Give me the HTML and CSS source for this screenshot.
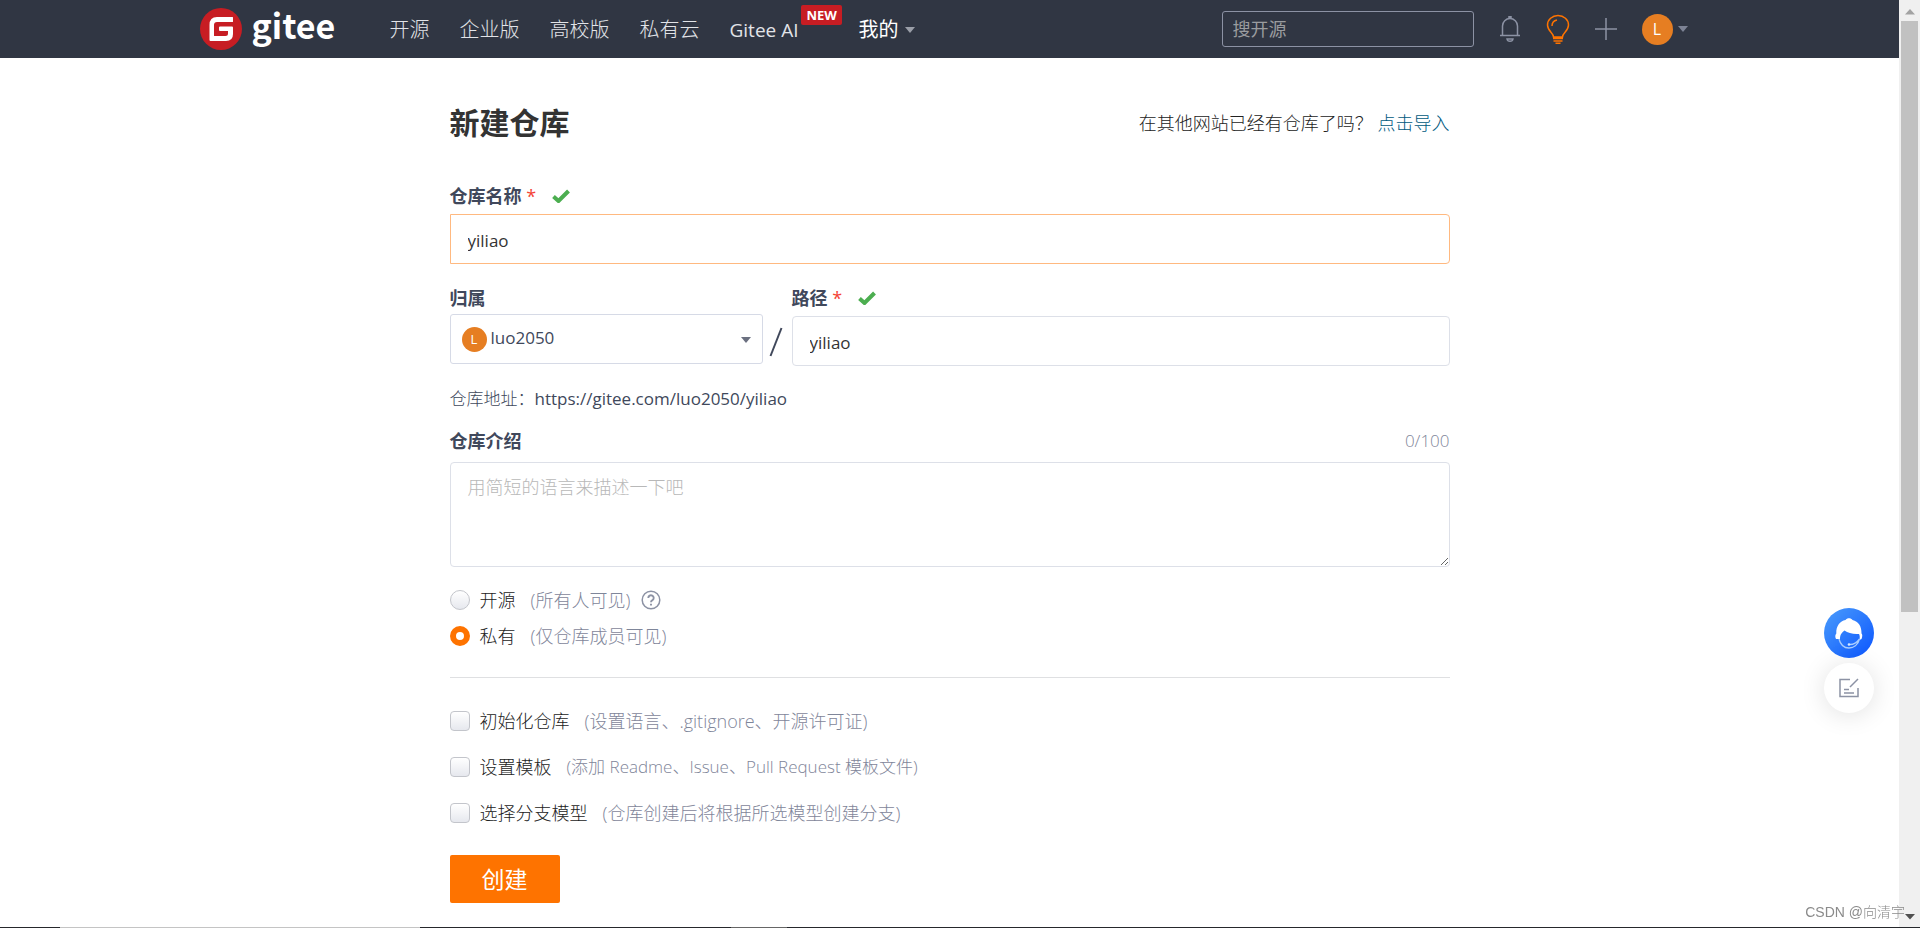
FILE: index.html
```html
<!DOCTYPE html>
<html lang="zh-CN">
<head>
<meta charset="utf-8">
<title>新建仓库 - Gitee</title>
<link rel="stylesheet" href="styles.css">
</head>
<body>
<div class="window">
  <div class="page">
    <header class="topbar">
      <div class="topbar-inner">
        <a class="logo" href="#">
          <svg class="logo-mark" viewBox="0 0 42 42" aria-hidden="true">
            <circle cx="21" cy="21" r="21" fill="#c71d23"/>
            <path d="M33 9.500V13.500Q33 14 32.500 14H17Q14 14 14 17V27.500Q14 28 14.500 28H25.500Q28 28 28 25.500V23H20Q19 23 19 22V19.500Q19 18.500 20 18.500H32Q33 18.500 33 19.500V26Q33 33 26 33H10.500Q9.500 33 9.500 32V17Q9.500 9 17 9H32.500Q33 9 33 9.500Z" fill="#fff"/>
          </svg>
          <span class="logo-text">gitee</span>
        </a>
        <nav class="nav">
          <a href="#">开源</a>
          <a href="#">企业版</a>
          <a href="#">高校版</a>
          <a href="#">私有云</a>
          <a class="nav-ai" href="#">Gitee AI<span class="badge">NEW</span></a>
          <a class="nav-mine" href="#">我的<svg class="caret" viewBox="0 0 10 6" aria-hidden="true"><path d="M0 0h10L5 6z" fill="currentColor"/></svg></a>
        </nav>
        <div class="tools">
          <input class="search" type="search" placeholder="搜开源" aria-label="搜开源">
          <button class="tool" type="button" aria-label="通知">
            <svg width="22" height="28" viewBox="0 0 22 28" fill="none" stroke="#8c92a4" stroke-width="1.500"><path d="M1 20.500h20M3.500 20V11a7.500 7.500 0 0 1 15 0v9M10 3V1.800h2V3M8 24c.5 3 5.500 3 6 0z"/></svg>
          </button>
          <button class="tool" type="button" aria-label="动态">
            <svg width="24" height="30" viewBox="0 0 24 30" fill="none" stroke="#fe7300" stroke-width="1.500"><path d="M7.500 23c0-4-6-6-6-12a10.500 9.500 0 0 1 21 0c0 6-6 8-6 12zM6 12q0-5 5-6M7 24.500h10M7.500 27h9M9.500 29.200h5"/></svg>
          </button>
          <button class="tool" type="button" aria-label="新建">
            <svg width="22" height="22" viewBox="0 0 22 22" stroke="#8c92a4" stroke-width="1.500"><path d="M11 0v22M0 11h22"/></svg>
          </button>
          <button class="tool user" type="button" aria-label="用户菜单"><span class="avatar">L</span><svg class="caret" viewBox="0 0 10 6" aria-hidden="true"><path d="M0 0h10L5 6z" fill="currentColor"/></svg></button>
        </div>
      </div>
    </header>

    <main class="content">
      <div class="heading">
        <h1>新建仓库</h1>
        <p>在其他网站已经有仓库了吗？ <a href="#">点击导入</a></p>
      </div>
      <form class="form">
        <div class="field">
          <div class="label-row">
            <label for="name">仓库名称 <span class="required">*</span></label>
            <svg class="check" viewBox="0 0 18 14" aria-hidden="true"><path d="M1.500 7.500L6.500 12 16.500 2" fill="none" stroke="#4cae50" stroke-width="4"/></svg>
          </div>
          <input class="text focused" id="name" type="text" value="yiliao">
        </div>
        <div class="path-row">
          <div class="owner">
            <div class="label-row"><label for="owner">归属</label></div>
            <div class="select-box">
              <select id="owner"><option>luo2050</option></select>
              <span class="avatar small">L</span>
              <svg class="caret" viewBox="0 0 10 6" aria-hidden="true"><path d="M0 0h10L5 6z" fill="currentColor"/></svg>
            </div>
          </div>
          <svg class="slash" viewBox="0 0 14 30" aria-hidden="true"><path d="M1.500 29L12.500 1" stroke="#40485b" stroke-width="2"/></svg>
          <div class="path">
            <div class="label-row">
              <label for="path">路径 <span class="required">*</span></label>
              <svg class="check" viewBox="0 0 18 14" aria-hidden="true"><path d="M1.500 7.500L6.500 12 16.500 2" fill="none" stroke="#4cae50" stroke-width="4"/></svg>
            </div>
            <input class="text" id="path" type="text" value="yiliao">
          </div>
        </div>
        <p class="address">仓库地址：<span class="url">https://gitee.com/luo2050/yiliao</span></p>
        <div class="field intro">
          <div class="label-row spread"><label for="intro">仓库介绍</label><span class="hint compact">0/100</span></div>
          <textarea id="intro" placeholder="用简短的语言来描述一下吧"></textarea>
        </div>
        <div class="radios">
          <div class="option">
            <input id="open" name="visibility" type="radio"><label for="open">开源</label><span class="hint">(所有人可见)</span>
            <svg class="help" viewBox="0 0 20 20" fill="none" stroke="#8c92a4" stroke-width="1.500" aria-hidden="true"><circle cx="10" cy="10" r="8.800"/><path d="M7.300 8a2.700 2.700 0 1 1 4.200 2.200Q10 11 10 12.300M10 13.700v1.800" stroke-width="1.900"/></svg>
          </div>
          <div class="option">
            <input id="private" name="visibility" type="radio" checked><label for="private">私有</label><span class="hint">(仅仓库成员可见)</span>
          </div>
        </div>
        <div class="checks">
          <div class="option"><input id="init" type="checkbox"><label for="init">初始化仓库</label><span class="hint">(设置语言、.gitignore、开源许可证)</span></div>
          <div class="option"><input id="tpl" type="checkbox"><label for="tpl">设置模板</label><span class="hint compact">(添加 Readme、Issue、Pull Request 模板文件)</span></div>
          <div class="option"><input id="branch" type="checkbox"><label for="branch">选择分支模型</label><span class="hint">(仓库创建后将根据所选模型创建分支)</span></div>
        </div>
        <button class="submit" type="submit">创建</button>
      </form>
    </main>
  </div>

  <div class="scrollbar" aria-hidden="true">
    <svg viewBox="0 0 10 6"><path d="M0 5.500h10L5 0z" fill="#a3a3a3"/></svg>
    <div class="track"><div class="thumb"></div></div>
    <svg viewBox="0 0 10 6"><path d="M0 0h10L5 5.500z" fill="#505050"/></svg>
  </div>
</div>

<div class="floating">
  <button type="button" class="float service" aria-label="在线客服">
    <svg viewBox="0 0 50 50" aria-hidden="true">
      <defs><linearGradient id="blue" x1="0" y1="0" x2="1" y2="1"><stop offset="0" stop-color="#4a9cfb"/><stop offset="1" stop-color="#0b55ff"/></linearGradient></defs>
      <circle cx="25" cy="25" r="25" fill="url(#blue)"/>
      <path d="M12 31c-1-2-1-4 .3-5.500C12 18 16 13 21.500 12c1.500-2.500 5.500-2.500 7 0 6 1.500 9 6 9 13.500 1 .5 1 3 0 5.500l-2 1c.5-3 .2-5-.5-6-6 .5-11-1-14.500-3.500-2.500 2-4.500 4-4.500 8.500z" fill="#fff"/>
      <path d="M15 31c1.500 6 5.500 9 10 9s9-3 10.500-9q-4 5.500-9.500 5.500" fill="none" stroke="#a9ceff" stroke-width="1.300"/>
      <circle cx="25" cy="36.500" r="1.300" fill="#d8e9ff"/>
    </svg>
  </button>
  <button type="button" class="float feedback" aria-label="反馈">
    <svg width="20" height="20" viewBox="0 0 20 20" fill="none" stroke="#8c92a4" stroke-width="1.500" aria-hidden="true"><path d="M11 1.500H1v17h18V10M19 1l-8 8M5 11.500h5M5 15h10"/></svg>
  </button>
</div>
<div class="watermark">CSDN @向清宇</div>
<div class="bottom-edge" aria-hidden="true"></div>
</body>
</html>
```
FILE: styles.css
```css
* { box-sizing: border-box; }
body {
  margin: 0;
  color: #40485b;
  background: #fff;
  font: 300 18px/24px "Open Sans", "Noto Sans CJK SC", sans-serif;
}
h1, p { margin: 0; }
a { text-decoration: none; }
button, input, select, textarea { font: inherit; color: inherit; }
button { padding: 0; border: 0; background: none; }
svg { display: block; flex: none; }

.window { display: flex; height: 100vh; overflow: hidden; }
.page { flex: 1; min-width: 0; }

.topbar { background: #303643; color: #d8dadf; font-weight: 400; }
.topbar-inner {
  display: flex;
  align-items: center;
  max-width: 1500px;
  height: 58px;
  margin: 0 auto;
  padding-right: 12px;
}
.logo { display: flex; align-items: center; gap: 10px; width: 136px; color: #fff; }
.logo-mark { width: 42px; height: 42px; }
.logo-text { padding-bottom: 8px; font: 700 34px/42px "Noto Sans CJK SC", sans-serif; }
.nav {
  display: flex;
  gap: 30px;
  margin-left: 54px;
  padding-top: 2px;
  font-size: 20px;
  font-weight: 300;
}
.nav a { color: #e2e4e8; white-space: nowrap; }
.nav .nav-ai { position: relative; margin-right: 30px; font-size: 19px; font-weight: 400; }
.nav .nav-mine { display: flex; align-items: center; gap: 7px; color: #fff; font-weight: 400; }
.badge {
  position: absolute;
  left: 100%;
  top: -13px;
  margin-left: 3px;
  padding: 0 5px;
  border-radius: 2px;
  background: #c71d23;
  color: #fff;
  font-size: 13px;
  font-weight: 700;
  line-height: 20px;
}
.caret { width: 10px; height: 6px; color: #9a9ea8; }
.tools { display: flex; align-items: center; gap: 25px; margin-left: auto; }
.search {
  width: 252px;
  height: 36px;
  padding: 0 10px;
  border: 1px solid #8c92a4;
  border-radius: 3px;
  background: transparent;
  appearance: none;
}
.search::placeholder { color: #9a9c9f; }
.tool { display: flex; align-items: center; gap: 5px; }
.avatar {
  width: 31px;
  border-radius: 50%;
  background: #e67e22;
  color: #fff;
  font-size: 16px;
  font-weight: 400;
  line-height: 31px;
  text-align: center;
}
.user .caret { color: #7d8395; }

.content { max-width: 1000px; margin: 0 auto; padding-top: 45px; }
.heading { display: flex; align-items: center; justify-content: space-between; color: #222; }
h1 { color: #333; font-size: 30px; font-weight: 700; line-height: 40px; }
.heading a { color: #005980; }
.form { margin-top: 41px; }
.label-row { display: flex; align-items: center; gap: 16px; height: 24px; font-weight: 700; }
.spread { justify-content: space-between; }
.required { color: #f44336; font-weight: 400; }
.check { width: 18px; height: 14px; }
.text {
  display: block;
  width: 100%;
  height: 50px;
  margin-top: 6px;
  padding: 2px 17px 0;
  border: 1px solid #dde0e8;
  border-radius: 4px;
  background: #fff;
  color: #333;
  font-size: 17px;
  font-weight: 400;
}
.focused { border-color: #ffb980; border-radius: 0 4px 4px 0; }
.path-row { display: flex; margin-top: 22px; }
.owner { width: 313px; }
.path { flex: 1; }
.slash { width: 14px; height: 30px; margin: 41px 9px 0 6px; }
.select-box { position: relative; margin-top: 4px; }
.select-box select {
  display: block;
  width: 100%;
  height: 50px;
  padding: 0 42px 2px 40px;
  border: 1px solid #d6dae6;
  border-radius: 3px;
  background: #fff;
  font-size: 17px;
  font-weight: 400;
  appearance: none;
}
.select-box .avatar { position: absolute; left: 12px; top: 13px; }
.small { width: 25px; font-size: 13px; line-height: 25px; }
.select-box .caret { position: absolute; right: 12px; top: 23px; color: #6b7080; }
.address { margin-top: 21px; font-size: 17px; }
.url { font-weight: 400; }
.intro { margin-top: 18px; }
.hint { color: #7f869a; font-weight: 300; }
.compact { font-size: 17px; }
textarea {
  display: block;
  width: 100%;
  height: 105px;
  margin-top: 9px;
  padding: 12px 17px;
  border: 1px solid #dde0e8;
  border-radius: 4px;
}
textarea::placeholder { color: #b8b8b8; }
.option { display: flex; align-items: center; height: 24px; }
.option label { margin: 0 15px 0 10px; color: #222; }
.option input {
  width: 20px;
  height: 20px;
  margin: 0;
  border: 1px solid #c3c5cb;
  border-radius: 4px;
  background: linear-gradient(#fff, #e6e8ee);
  appearance: none;
}
.option input[type="radio"] { border-radius: 50%; }
.option input[type="radio"]:checked { border: 6px solid #fe7300; background: #fff; }
.help { width: 20px; height: 20px; margin-left: 11px; }
.radios {
  display: grid;
  gap: 12px;
  margin-top: 21px;
  padding-bottom: 29px;
  border-bottom: 1px solid #dfe0e2;
}
.checks { display: grid; gap: 22px; margin-top: 31px; }
.submit {
  width: 110px;
  height: 48px;
  margin-top: 30px;
  border-radius: 2px;
  background: #fe7300;
  color: #fff;
  font-size: 23px;
  font-weight: 400;
}

.scrollbar {
  display: flex;
  flex-direction: column;
  align-items: center;
  width: 21px;
  padding: 9px 2px 8px;
  background: #f0f0f0;
}
.scrollbar svg { width: 10px; height: 6px; }
.track { flex: 1; width: 100%; padding: 6px 0; }
.thumb { height: calc(200% / 3); background: #c1c1c1; }

.floating { position: fixed; right: 46px; bottom: 215px; display: grid; gap: 5px; }
.float { display: grid; place-items: center; width: 50px; height: 50px; border-radius: 50%; }
.service svg { width: 50px; height: 50px; }
.feedback { background: #fff; box-shadow: 0 2px 26px rgba(0, 0, 0, .12); }
.watermark {
  position: fixed;
  right: 15px;
  bottom: 4px;
  color: #8b8b8b;
  font: 300 14px/24px "Liberation Sans", "Noto Sans CJK SC", sans-serif;
}
.bottom-edge {
  position: fixed;
  right: 0;
  bottom: 0;
  left: 0;
  height: 1px;
  background: linear-gradient(90deg, #26282c 60px, #c4c4c4 60px 420px, #26282c 420px 731px, #666 731px 787px, #26282c 787px);
}
```
